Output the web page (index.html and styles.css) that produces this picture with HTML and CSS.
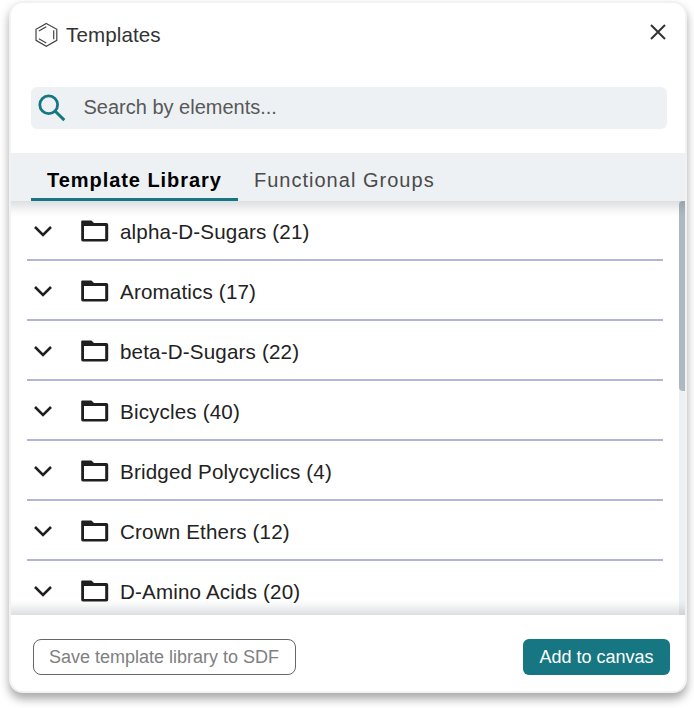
FILE: index.html
```html
<!DOCTYPE html>
<html lang="en">
<head>
<meta charset="utf-8">
<title>Templates</title>
<link rel="stylesheet" href="styles.css">
</head>
<body>
<svg width="0" height="0" class="sprite" aria-hidden="true">
  <symbol id="chevron" viewBox="0 0 20 14"><path d="M2 3 L10 11 L18 3" fill="none" stroke="#1f1f1f" stroke-width="2.5"/></symbol>
  <symbol id="folder" viewBox="0 0 28 22"><path fill="#1f1f1f" fill-rule="evenodd" d="M1.2 0.4H10.4L13 3H25.5Q27.2 3 27.2 4.7V19.8Q27.2 21.5 25.5 21.5H1.8Q0.2 21.5 0.2 19.8V1.5Q0.2 .4 1.2 .4ZM3 6V19H24.2V6Z"/></symbol>
</svg>
<div class="dialog" role="dialog">
  <header class="header">
    <svg class="logo" width="24" height="26" viewBox="0 0 24 26" fill="none" stroke="#444" stroke-width="1.2"><path d="M12.3 1.4 L22.8 7.3 V18.3 L12.3 24.2 L2 18.3 V7.3Z M12.3 4.7 L4.9 8.9 M19.7 8.3 V17.2 M12.3 20.9 L4.9 16.7"/></svg>
    <h1 class="title">Templates</h1>
    <button class="close" aria-label="Close"><svg width="18" height="18" viewBox="0 0 18 18" fill="none" stroke="#333" stroke-width="2"><path d="M2 2 L16 16 M16 2 L2 16"/></svg></button>
  </header>
  <div class="search">
    <svg width="28" height="28" viewBox="0 0 28 28" fill="none" stroke="#167782" stroke-width="2.8"><circle cx="10.7" cy="10.8" r="8.9"/><path d="M17 17 L26.3 26.1" stroke-width="3"/></svg>
    <span class="placeholder">Search by elements...</span>
  </div>
  <nav class="tabs">
    <div class="tab active">Template Library</div>
    <div class="tab">Functional Groups</div>
  </nav>
  <main class="content">
    <div class="list">
      <div class="row"><svg class="chevron"><use href="#chevron"/></svg><svg class="folder"><use href="#folder"/></svg><span>alpha-D-Sugars (21)</span></div>
      <div class="row"><svg class="chevron"><use href="#chevron"/></svg><svg class="folder"><use href="#folder"/></svg><span>Aromatics (17)</span></div>
      <div class="row"><svg class="chevron"><use href="#chevron"/></svg><svg class="folder"><use href="#folder"/></svg><span>beta-D-Sugars (22)</span></div>
      <div class="row"><svg class="chevron"><use href="#chevron"/></svg><svg class="folder"><use href="#folder"/></svg><span>Bicycles (40)</span></div>
      <div class="row"><svg class="chevron"><use href="#chevron"/></svg><svg class="folder"><use href="#folder"/></svg><span>Bridged Polycyclics (4)</span></div>
      <div class="row"><svg class="chevron"><use href="#chevron"/></svg><svg class="folder"><use href="#folder"/></svg><span>Crown Ethers (12)</span></div>
      <div class="row"><svg class="chevron"><use href="#chevron"/></svg><svg class="folder"><use href="#folder"/></svg><span>D-Amino Acids (20)</span></div>
    </div>
    <div class="scrollbar"><div class="thumb"></div></div>
  </main>
  <footer class="footer">
    <button class="button save">Save template library to SDF</button>
    <button class="button add">Add to canvas</button>
  </footer>
</div>
</body>
</html>
```
FILE: styles.css
```css
* { box-sizing: border-box; }
body {
  margin: 0;
  padding: 1px 7px 0 9px;
  height: 708px;
  overflow: hidden;
  background: #fff;
  font-family: "Liberation Sans", Arial, sans-serif;
}
.sprite { position: absolute; }
.dialog {
  display: flex;
  flex-direction: column;
  height: 692px;
  border: 2px solid #f2f2f2;
  border-radius: 14px;
  background: #fff;
  box-shadow: 0 6px 10px rgba(0, 0, 0, .34);
}
.header {
  display: flex;
  align-items: center;
  height: 64px;
  padding: 0 18px 0 23px;
  flex: none;
}
.logo { margin-top: -1px; }
.title {
  margin: 0 auto 0 8px;
  font-size: 20.6px;
  font-weight: 400;
  letter-spacing: .1px;
  color: #333;
}
.close {
  display: flex;
  padding: 0;
  margin-top: -6px;
  border: 0;
  background: none;
}
.search {
  display: flex;
  align-items: center;
  flex: none;
  height: 42px;
  margin: 20px 18px 24px 20px;
  padding-left: 7px;
  border-radius: 6px;
  background: #edf1f4;
}
.placeholder {
  margin: -2px 0 0 17.5px;
  font-size: 20px;
  color: #585858;
}
.tabs {
  display: flex;
  flex: none;
  height: 48px;
  padding-left: 20px;
  background: #edf1f4;
}
.tab {
  padding: 0 16px;
  line-height: 54px;
  font-size: 20px;
  letter-spacing: 1.02px;
  color: #4a4a4a;
}
.tab.active {
  border-bottom: 3px solid #167782;
  font-weight: 700;
  letter-spacing: .95px;
  color: #000;
}
.content {
  position: relative;
  display: flex;
  justify-content: space-between;
  height: 414px;
  overflow: hidden;
}
.content::before, .content::after {
  content: "";
  position: absolute;
  left: 0;
  right: 0;
  height: 16px;
}
.content::before {
  top: 0;
  background: linear-gradient(rgba(50, 65, 75, .17), rgba(50, 65, 75, .12) 25%, rgba(50, 65, 75, .03) 70%, transparent);
}
.content::after {
  bottom: 0;
  background: linear-gradient(transparent, rgba(50, 65, 75, .03) 30%, rgba(50, 65, 75, .12) 75%, rgba(50, 65, 75, .17));
}
.list { width: 636px; margin-left: 16px; }
.row {
  display: flex;
  align-items: center;
  height: 60px;
  border-bottom: 2px solid #b1b6d5;
  font-size: 20.6px;
  letter-spacing: .16px;
  color: #222;
}
.row span { margin-top: 3px; }
.chevron { width: 20px; height: 14px; margin-left: 6px; margin-top: 2px; }
.folder { width: 28px; height: 22px; margin: 2px 11px 0 28px; }
.scrollbar { width: 6px; height: 100%; background: #edf1f4; }
.thumb { height: 190px; border-radius: 4px 0 0 4px; background: #aeb8c1; }
.footer {
  display: flex;
  align-items: center;
  justify-content: space-between;
  height: 76px;
  padding: 8px 15px 0 22px;
}
.button {
  height: 36px;
  padding: 0;
  border-radius: 8px;
  font: 18px "Liberation Sans", Arial, sans-serif;
}
.save { width: 263px; padding-right: 1px; border: 1px solid #666; background: #fff; color: #808080; }
.add { width: 147px; border: 0; border-radius: 6px; background: #167782; color: #fff; }
```
